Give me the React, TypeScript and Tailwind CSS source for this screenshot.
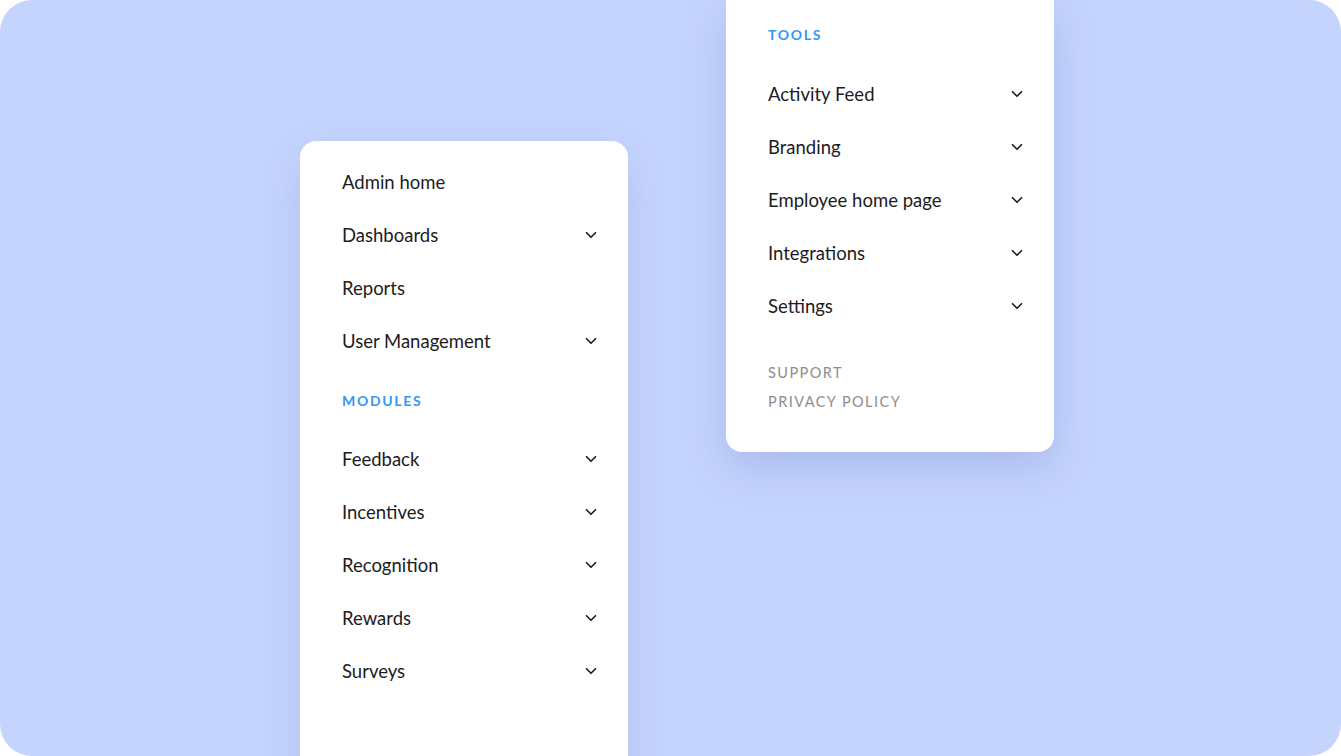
import { ChevronDown } from "lucide-react";

type Item = { label: string; sub?: boolean };

const adminItems: Item[] = [
  { label: "Admin home" },
  { label: "Dashboards", sub: true },
  { label: "Reports" },
  { label: "User Management", sub: true },
];

const moduleItems: Item[] = [
  { label: "Feedback", sub: true },
  { label: "Incentives", sub: true },
  { label: "Recognition", sub: true },
  { label: "Rewards", sub: true },
  { label: "Surveys", sub: true },
];

const toolItems: Item[] = [
  { label: "Activity Feed", sub: true },
  { label: "Branding", sub: true },
  { label: "Employee home page", sub: true },
  { label: "Integrations", sub: true },
  { label: "Settings", sub: true },
];

function NavRow({ label, sub }: Item) {
  return (
    <div className="flex h-[53px] items-center justify-between pl-[42px] pr-[28px] text-[18.5px] text-[#1c1c1e]">
      <span className="pt-[2px]">{label}</span>
      {sub && <ChevronDown size={18} strokeWidth={2.2} className="text-[#1c1c1e]" />}
    </div>
  );
}

function SectionTitle({ children }: { children: string }) {
  return (
    <div className="pl-[42px] text-[14px] leading-5 font-bold tracking-[0.12em] text-[#3497f3]">
      {children}
    </div>
  );
}

export default function App() {
  return (
    <div className="h-[756px] w-full bg-white" style={{ fontFamily: "Lato, 'Noto Sans', sans-serif" }}>
      <div className="flex h-full items-start gap-[98px] overflow-hidden rounded-[32px] bg-[#c5d4fd] pl-[300px]">
        <div className="mt-[141px] h-[700px] w-[328px] shrink-0 rounded-[16px] bg-white pt-[14px] shadow-[0_16px_40px_rgba(90,110,190,0.18)]">
          {adminItems.map((i) => (
            <NavRow key={i.label} {...i} />
          ))}
          <div className="mt-[24px] mb-[21px]">
            <SectionTitle>MODULES</SectionTitle>
          </div>
          {moduleItems.map((i) => (
            <NavRow key={i.label} {...i} />
          ))}
        </div>

        <div className="w-[328px] shrink-0 rounded-b-[16px] bg-white pt-[25px] pb-10 shadow-[0_16px_40px_rgba(90,110,190,0.25)]">
          <div className="mb-[22px]">
            <SectionTitle>TOOLS</SectionTitle>
          </div>
          {toolItems.map((i) => (
            <NavRow key={i.label} {...i} />
          ))}
          <div className="mt-[31px] flex flex-col gap-[9px] pl-[42px] text-[14.5px] leading-5 tracking-[0.1em] text-[#8d8d8d]">
            <span>SUPPORT</span>
            <span>PRIVACY POLICY</span>
          </div>
        </div>
      </div>
    </div>
  );
}
